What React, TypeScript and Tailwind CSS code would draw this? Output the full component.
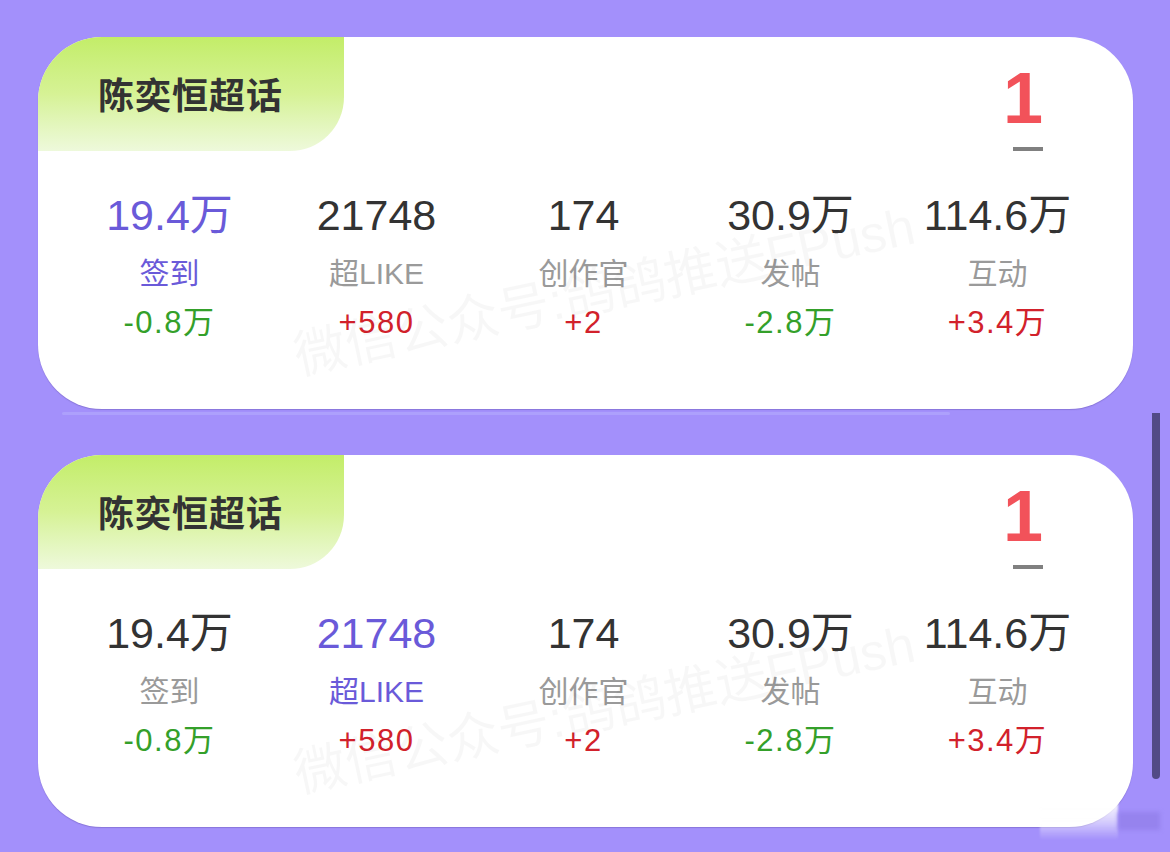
import React from "react";

type Stat = {
  value: string;
  label: string;
  delta: string;
  up: boolean;
};

const stats: Stat[] = [
  { value: "19.4万", label: "签到", delta: "-0.8万", up: false },
  { value: "21748", label: "超LIKE", delta: "+580", up: true },
  { value: "174", label: "创作官", delta: "+2", up: true },
  { value: "30.9万", label: "发帖", delta: "-2.8万", up: false },
  { value: "114.6万", label: "互动", delta: "+3.4万", up: true },
];

const font = {
  fontFamily: '"Liberation Sans", "Noto Sans CJK SC", sans-serif',
};

function TopicCard({ highlight }: { highlight: number }) {
  return (
    <div className="relative flex h-[372px] w-[1095px] flex-col overflow-hidden rounded-[64px] bg-white shadow-[0_1px_1px_rgba(60,40,120,0.25)]">
      {/* header: topic tab + rank */}
      <div className="flex h-[114px] justify-between">
        <div className="flex w-[306px] items-center rounded-br-[54px] bg-gradient-to-b from-[#c3ed68] via-[#d6f295] to-[#eef9db] pl-[60px] pt-[6px]">
          <span className="text-[36px] font-bold leading-none tracking-[1px] text-[#333333]">
            陈奕恒超话
          </span>
        </div>
        <div className="mr-[80px] flex w-[60px] flex-col items-center pt-[25px]">
          <span className="text-[72px] font-bold leading-[72px] text-[#f2525a]">1</span>
          <span className="ml-[10px] mt-[13px] h-[6px] w-[30px] bg-[#808080]" />
        </div>
      </div>

      {/* stats row */}
      <div className="mt-[43px] flex pl-[28px]">
        {stats.map((s, i) => (
          <div key={s.label} className="flex w-[207px] flex-col items-center">
            <span
              className={`text-[43px] leading-[43px] ${
                i === highlight ? "text-[#6a5ad9]" : "text-[#333333]"
              }`}
            >
              {s.value}
            </span>
            <span
              className={`mt-[22px] text-[30px] leading-[30px] ${
                i === highlight ? "text-[#6a5ad9]" : "text-[#9a9a9a]"
              }`}
            >
              {s.label}
            </span>
            <span
              className={`mt-[18px] text-[31px] leading-[31px] tracking-[1.5px] ${
                s.up ? "text-[#d2212b]" : "text-[#34a02a]"
              }`}
            >
              {s.delta}
            </span>
          </div>
        ))}
      </div>

      {/* faint diagonal watermark */}
      <div className="pointer-events-none absolute left-[250px] top-[228px] -rotate-[12deg] whitespace-nowrap text-[52px] leading-none text-[rgba(0,0,0,0.03)]">
        微信公众号:鸽鸽推送FPush
      </div>
    </div>
  );
}

export default function App() {
  return (
    <div
      className="relative h-[852px] w-[1170px] overflow-hidden bg-[#a390fb] pl-[38px] pt-[37px]"
      style={font}
    >
      <TopicCard highlight={0} />
      <div className="h-[46px] pt-[3px]">
        <div className="ml-[24px] h-[3px] w-[888px] rounded-full bg-[#ada0fc]" />
      </div>
      <TopicCard highlight={1} />

      {/* scroll indicator */}
      <div className="absolute left-[1152px] top-[413px] h-[366px] w-[8px] rounded-b-full bg-[#524a86]" />

      {/* soft smudge at the bottom corner */}
      <div className="absolute left-[1040px] top-[800px] h-[40px] w-[78px] bg-gradient-to-b from-white via-[rgba(255,255,255,0.6)] to-[rgba(163,144,251,0)] blur-[1px]" />
      <div className="absolute left-[1118px] top-[812px] h-[18px] w-[42px] bg-[#9683ee] blur-[2px]" />
    </div>
  );
}
